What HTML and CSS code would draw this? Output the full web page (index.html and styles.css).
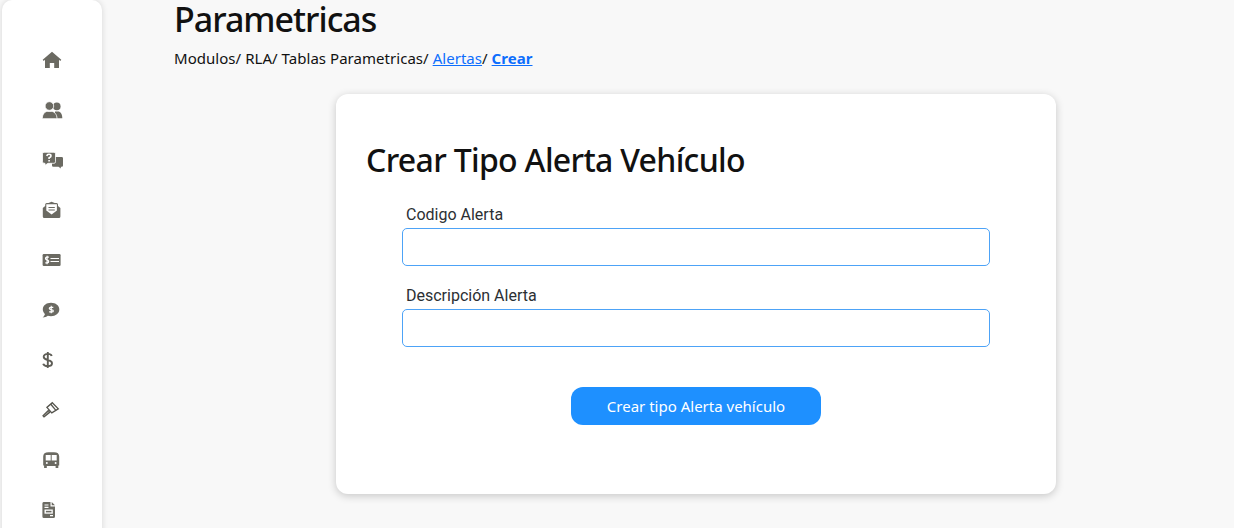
FILE: index.html
```html
<!DOCTYPE html>
<html lang="es">
<head>
<meta charset="utf-8">
<title>Crear Tipo Alerta Vehículo</title>
<link rel="stylesheet" href="styles.css">
</head>
<body>
<div class="shell">
  <nav class="sidebar">
    <a class="nav-item"><svg viewBox="0 0 24 20"><path class="fg" d="M10 1.700 19.300 9.700 18.300 10.900 17 9.800V18H12.200V13H7.800V18H3V9.800L1.700 10.900 .7 9.700Z"/></svg></a>
    <a class="nav-item"><svg viewBox="0 0 24 20"><circle class="fg" cx="14.800" cy="6.400" r="3.800"/><path class="fg" d="M13 11.500H16C18.500 11.500 20.300 14 20.300 18.300H13Z"/><circle class="fg halo" cx="7.400" cy="6" r="4.300"/><path class="fg halo" d="M.3 18.700C.3 14 3 11.400 5.500 11.400H9.500C12 11.400 15 14 15 18.700Z"/></svg></a>
    <a class="nav-item"><svg viewBox="0 0 24 20"><path class="fg" d="M10 7H19.700Q21 7 21 8.300V15.500Q21 16.800 19.700 16.800H18.800V18.500L16.500 16.800H11.300Q10 16.800 10 15.500Z"/><path class="fg halo" d="M2 2.300H12Q13.500 2.300 13.500 3.800V11.800Q13.500 13.300 12 13.300H6L3 15.300V13.300H2Q.5 13.300 .5 11.800V3.800Q.5 2.300 2 2.300Z"/><path class="cut" d="M4.800 6Q5.100 4.300 7 4.300 9 4.300 9 5.900 9 7 7.100 7.800V9"/><path class="cut" d="M7.100 10V11.600"/></svg></a>
    <a class="nav-item"><svg viewBox="0 0 24 20"><path class="fg" d="M.8 8 3.200 6V4.500Q3.200 3 4.700 3H6.500L9.600 1.800 12.700 3H14.500Q16 3 16 4.500V6L18.400 8V16.500Q18.400 18 16.900 18H2.300Q.8 18 .8 16.500Z"/><path class="paper" d="M4.300 4.300H14.900V10.500L9.600 14.500 4.300 10.500Z"/><path class="ink" d="M6.500 7.500H12.800M6.500 10H12.800"/></svg></a>
    <a class="nav-item"><svg viewBox="0 0 24 20"><rect class="fg" x=".6" y="4" width="18" height="12" rx="1.200"/><path class="cut-thin" d="M6.900 7.200H4.800Q3.500 7.200 3.500 8.400 3.500 9.500 4.800 9.800 6.700 10.200 6.700 11.500 6.700 12.800 5.200 12.800H3.300M5.100 5.800V14.200M8.500 8.500H17M8.500 11.500H17"/></svg></a>
    <a class="nav-item"><svg viewBox="0 0 24 20"><path class="fg" d="M9 2.800C13.700 2.800 17.300 5.600 17.300 9.500 17.300 13.400 13.700 16.200 9 16.200 7.800 16.200 6.800 16 5.800 15.700 4.500 16.700 2.800 17.400.6 17.500 1.900 16.300 2.700 15.100 2.900 13.900 1.600 12.700.8 11.100.8 9.500.8 5.600 4.300 2.800 9 2.800Z"/><path class="cut-thin" d="M11.300 7.300H8.600Q7.300 7.300 7.300 8.300 7.300 9.300 8.500 9.500L10 9.800Q11.300 10 11.300 11 11.300 11.900 10 11.900H7.100M9.200 5.800V13.300"/></svg></a>
    <a class="nav-item"><svg viewBox="0 0 24 20"><path class="line" d="M9.700 6C9.300 4.600 8 3.900 5.800 3.900 3.300 3.900 1.700 5 1.700 6.800 1.700 8.800 3.600 9.500 5.800 10 8.300 10.600 10 11.300 10 13.300 10 15.200 8.300 16.200 5.800 16.200 3.300 16.200 1.600 15.200 1.200 13.800M5.800 2V18"/></svg></a>
    <a class="nav-item"><svg viewBox="0 0 24 20"><path class="outline" d="M10.300 2.700 16.300 8.900 9.800 12.900 4.900 7.400Z"/><path class="outline" d="M8.600 4 13.900 10.400"/><path class="outline-heavy" d="M6.300 10.500 .9 15.800 2 17 7.800 12.300Z"/></svg></a>
    <a class="nav-item"><svg viewBox="0 0 24 20"><path class="fg" d="M6.500 2.300H12C15.500 2.300 17.200 3.800 17.200 6.500V15.600H16.300V18H13.600V16H4.800V18H2.100V15.600H1.200V6.500C1.200 3.800 3 2.300 6.500 2.300Z"/><path class="knock" d="M3.700 5.100H8.700V10.400H3.700ZM9.700 5.100H14.700V10.400H9.700Z"/><circle class="knock" cx="4.800" cy="13" r="1"/><circle class="knock" cx="13.600" cy="13" r="1"/></svg></a>
    <a class="nav-item"><svg viewBox="0 0 24 20"><path class="fg" d="M1.500 2H8.500V6.500H13V16.500Q13 18 11.500 18H1.800Q.4 18 .4 16.500V3.500Q.4 2 1.500 2ZM9.700 2 13 5.300H9.700Z"/><path class="cut-thin" d="M2.500 5H6.500M2.500 7.300H6.500M8 15.700H11"/><path class="knock" d="M2.500 9.500H10.800V13.700H2.500Z"/><path class="fg" d="M3.900 10.800H9.500V12.400H3.900Z"/></svg></a>
  </nav>
  <main class="content">
    <h1 class="page-title">Parametricas</h1>
    <p class="crumbs">Modulos/ RLA/ Tablas Parametricas/ <a class="crumb-link" href="#">Alertas</a>/ <a class="crumb-current" href="#">Crear</a></p>
    <section class="card">
      <h2 class="card-title">Crear Tipo Alerta Vehículo</h2>
      <form class="form">
        <div class="field">
          <label class="field-label" for="codigo">Codigo Alerta</label>
          <input class="field-input" id="codigo" type="text">
        </div>
        <div class="field">
          <label class="field-label" for="descripcion">Descripción Alerta</label>
          <input class="field-input" id="descripcion" type="text">
        </div>
        <div class="actions">
          <button class="submit" type="button">Crear tipo Alerta vehículo</button>
        </div>
      </form>
    </section>
  </main>
</div>
</body>
</html>
```
FILE: styles.css
```css
* {
  box-sizing: border-box;
}

html,
body {
  margin: 0;
  height: 100%;
  overflow: hidden;
}

body {
  background: #f8f8f8;
  color: #212529;
  font-family: "Noto Sans", "Open Sans", sans-serif;
}

.shell {
  display: flex;
  height: 528px;
  overflow: hidden;
}

.sidebar {
  flex: none;
  display: flex;
  flex-direction: column;
  width: 100px;
  height: 560px;
  margin-left: 2px;
  padding: 35px 0 0 40px;
  background: #fff;
  border-radius: 10px 10px 0 0;
  box-shadow: 0 0 6px rgba(0, 0, 0, 0.14);
}

.nav-item {
  flex: none;
  display: flex;
  align-items: center;
  height: 50px;
}

.nav-item svg {
  display: block;
  width: 24px;
  height: 20px;
}

.fg {
  fill: #6b6a62;
}

.halo {
  stroke: #fff;
  stroke-width: 0.8;
}

.cut,
.cut-thin,
.ink,
.line,
.outline {
  fill: none;
}

.cut {
  stroke: #fff;
  stroke-width: 1.6;
}

.cut-thin {
  stroke: #fff;
  stroke-width: 1.2;
}

.paper,
.knock {
  fill: #fff;
}

.ink {
  stroke: #6b6a62;
  stroke-width: 1.2;
}

.line {
  stroke: #5f5e57;
  stroke-width: 1.9;
}

.outline {
  stroke: #55544d;
  stroke-width: 1.3;
}

.outline-heavy {
  stroke: #55544d;
  stroke-width: 1.1;
  fill: #a3a29b;
}

.content {
  flex: 1;
  min-width: 0;
  padding: 0 16px 0 72px;
}

.page-title {
  margin: 0;
  font-size: 34px;
  font-weight: 500;
  line-height: 38px;
  letter-spacing: -1px;
  color: #111;
}

.crumbs {
  margin: 9px 0 0;
  font-size: 15px;
  line-height: 22px;
  letter-spacing: 0.04px;
  color: #111;
}

.crumb-link {
  color: #0d6efd;
}

.crumb-current {
  color: #0d6efd;
  font-weight: 700;
}

.card {
  width: 720px;
  height: 400px;
  margin: 25px auto 0;
  padding: 45px 30px 0;
  background: #fff;
  border-radius: 12px;
  box-shadow: 0 2px 8px rgba(0, 0, 0, 0.2);
}

.card-title {
  margin: 0;
  font-size: 32px;
  font-weight: 500;
  line-height: 42px;
  letter-spacing: -0.68px;
  color: #111;
}

.form {
  display: flex;
  flex-direction: column;
  gap: 18px;
  width: 588px;
  margin: 22px 0 0 36px;
}

.field {
  display: flex;
  flex-direction: column;
}

.field-label {
  padding: 0 4px 1px;
  font-family: Roboto, sans-serif;
  font-size: 16px;
  line-height: 24px;
  color: #2b2f33;
}

.field-input {
  display: block;
  width: 100%;
  height: 38px;
  background: #fff;
  border: 1px solid #4da3f7;
  border-radius: 5px;
  outline: none;
}

.actions {
  display: flex;
  justify-content: center;
  margin-top: 22px;
}

.submit {
  width: 250px;
  height: 38px;
  padding: 0;
  border: 0;
  border-radius: 12px;
  background: #1e90ff;
  color: #fff;
  font-family: "Noto Sans", "Open Sans", sans-serif;
  font-size: 15px;
}
```
